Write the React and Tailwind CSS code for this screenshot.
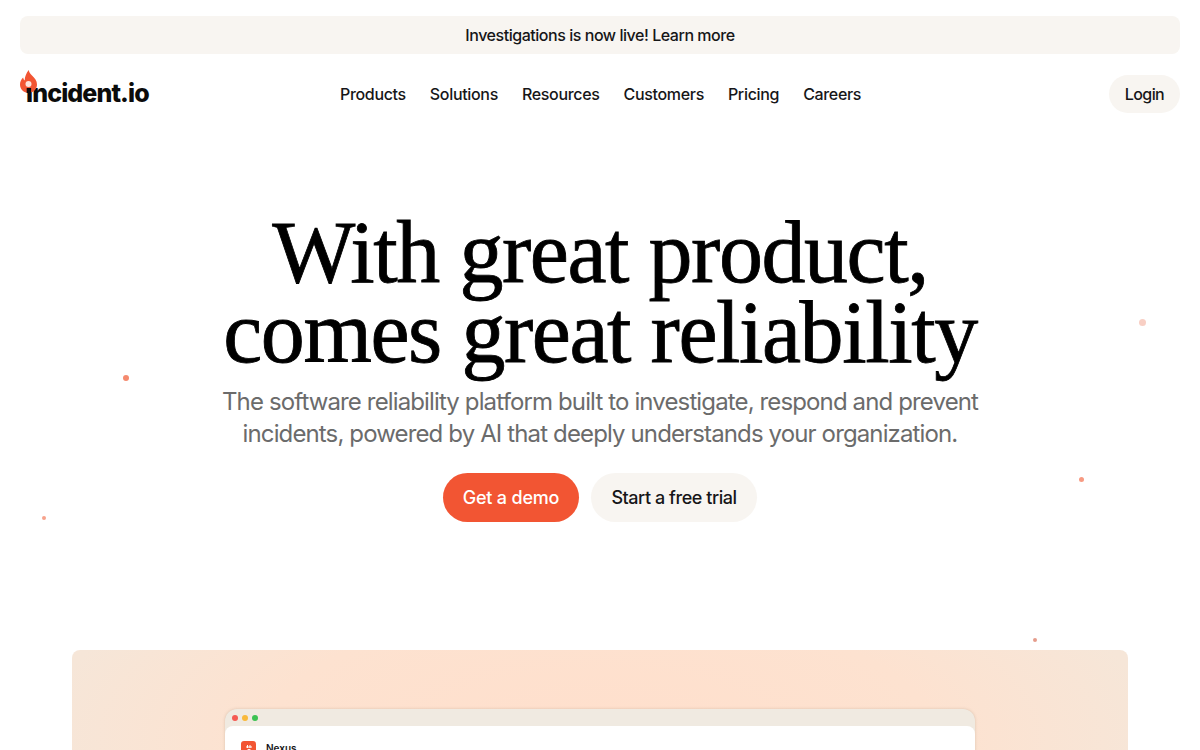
const dots = [
  { c: "left-[123px] top-[375px] w-[6px] h-[6px] bg-[#f58a6e]" },
  { c: "left-[42px] top-[516px] w-[4px] h-[4px] bg-[#f7a28c]" },
  { c: "left-[1139px] top-[319px] w-[7px] h-[7px] bg-[#f8cfc4]" },
  { c: "left-[1079px] top-[477px] w-[5px] h-[5px] bg-[#f79a82]" },
  { c: "left-[1033px] top-[638px] w-[4px] h-[4px] bg-[#e59c8c]" },
];

function Flame({ className }) {
  return (
    <svg viewBox="0 0 17 23" className={className}>
      <path
        fill="#f25533"
        d="M8.800 0c0.300 2.400 1.500 3.900 3.200 5.500C14.700 8 17 10.700 17 14.500 17 19.200 13.300 23 8.500 23S0 19.200 0 14.500c0-2.900 1.200-5.300 3.100-7.100 0.200 1.300 0.700 2.300 1.600 3C4.800 6.600 6.300 3 8.800 0z"
      />
      <circle cx="8.500" cy="14" r="3" fill="#fde4dc" />
      <rect x="6.700" y="18" width="4.400" height="5" fill="#0b0b0b" />
    </svg>
  );
}

function Logo() {
  return (
    <div className="relative w-[130px] h-[36px]">
      <span className="absolute left-[6px] top-[5px] text-[25px] leading-[36px] font-extrabold tracking-[-0.9px] text-[#0b0b0b]">
        incident.io
      </span>
      <Flame className="absolute left-0 top-0 w-[17px] h-[23px]" />
    </div>
  );
}

export default function App() {
  return (
    <div className="relative h-[750px] overflow-hidden bg-white text-[#161618] [font-family:Inter,sans-serif]">
      <div className="px-5 pt-4">
        <div className="h-[38px] rounded-lg bg-[#f8f5f1] flex items-center justify-center text-base font-medium tracking-[-0.46px]">
          Investigations is now live! Learn more
        </div>
      </div>

      <header className="px-5 h-[76px] mt-[2px] flex items-center">
        <div className="w-[320px] -mt-[12px]">
          <Logo />
        </div>
        <nav className="flex-1 flex gap-6 text-base font-medium tracking-[-0.33px] leading-[24px]">
          <span>Products</span>
          <span>Solutions</span>
          <span>Resources</span>
          <span>Customers</span>
          <span>Pricing</span>
          <span>Careers</span>
        </nav>
        <div className="h-[38px] w-[71px] rounded-full bg-[#f8f5f1] flex items-center justify-center text-base font-medium tracking-[-0.6px]">
          Login
        </div>
      </header>

      <main className="flex flex-col items-center pt-[81px]">
        <h1 className="text-[88px] leading-[80px] text-center text-black tracking-[-1.45px] [font-family:'Liberation_Serif',serif] [-webkit-text-stroke:0.8px_black]">
          With great product,
          <br />
          comes great reliability
        </h1>
        <p className="mt-[13px] text-center text-[24px] leading-[32px] text-[#6b6b6b] tracking-[-0.87px]">
          The software reliability platform built to investigate, respond and prevent
          <br />
          incidents, powered by AI that deeply understands your organization.
        </p>
        <div className="mt-[23px] flex gap-3">
          <div className="h-[49px] w-[136px] rounded-full bg-[#f25533] text-white flex items-center justify-center text-lg font-medium tracking-[-0.2px]">
            Get a demo
          </div>
          <div className="h-[49px] w-[166px] rounded-full bg-[#f8f5f1] flex items-center justify-center text-lg font-medium tracking-[-0.45px]">
            Start a free trial
          </div>
        </div>

        <section className="mt-[128px] w-[1056px] h-[300px] rounded-lg bg-[radial-gradient(ellipse_at_50%_30%,#ffdfcc_0%,#fde2d0_45%,#f6e6d8_75%)] flex justify-center pt-[59px]">
          <div className="w-[750px] h-[240px] rounded-xl bg-[#f0eae1] shadow-[0_0_3px_rgba(120,90,60,0.25)] overflow-hidden">
            <div className="h-[17px] flex items-center gap-[4px] pl-[7px]">
              <span className="w-[6px] h-[6px] rounded-full bg-[#f55a52]" />
              <span className="w-[6px] h-[6px] rounded-full bg-[#f9b93a]" />
              <span className="w-[6px] h-[6px] rounded-full bg-[#3cc252]" />
            </div>
            <div className="h-full rounded-t-lg bg-white pt-[15px] pl-[16px] flex items-start gap-[10px]">
              <div className="w-[15px] h-[15px] rounded-[3px] bg-[#f25533] flex items-center justify-center">
                <svg viewBox="0 0 10 10" className="w-[10px] h-[10px]">
                  <path d="M3.500 1v3M6 1v3M2 3h6" stroke="#fff" strokeWidth="1" fill="none" />
                  <circle cx="5" cy="7" r="2" fill="#fff" />
                </svg>
              </div>
              <span className="text-[10px] leading-[15px] font-semibold">Nexus</span>
            </div>
          </div>
        </section>
      </main>

      {dots.map((d, i) => (
        <span key={i} className={`absolute rounded-full ${d.c}`} />
      ))}
    </div>
  );
}
